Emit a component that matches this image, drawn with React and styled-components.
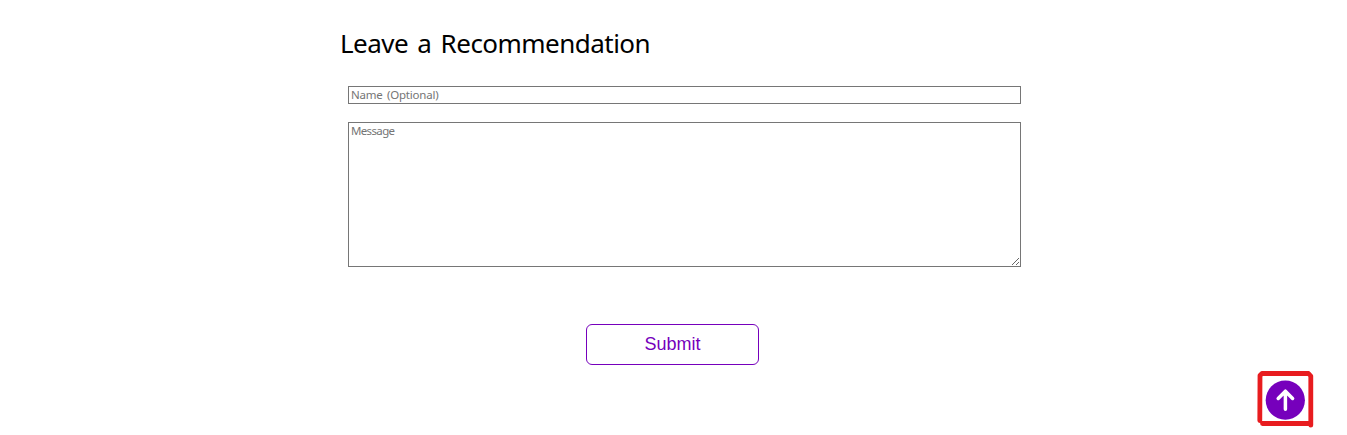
import React from "react";
import styled, { createGlobalStyle } from "styled-components";

const GlobalStyle = createGlobalStyle`
  * { box-sizing: border-box; }
  body { margin: 0; background: #fff; overflow: hidden; }
`;

const humanist = `"Trebuchet MS", "Noto Sans", sans-serif`;

const Section = styled.section`
  width: 680px;
  margin-left: 341px;
  padding-top: 25px;
  display: flex;
  flex-direction: column;
`;

const Title = styled.h2`
  margin: 0 0 0 -1px;
  height: 36px;
  font: 400 26px/36px ${humanist};
  letter-spacing: -0.53px;
  word-spacing: 3px;
  color: #000;
  white-space: nowrap;
`;

const Form = styled.form`
  margin: 25px 0 0 7px;
  display: flex;
  flex-direction: column;
`;

const NameField = styled.input`
  height: 18px;
  padding: 0 2px 1px;
  border: 1px solid #767676;
  border-radius: 0;
  background: #fff;
  font: 400 11.5px/15px ${humanist};
  letter-spacing: -0.2px;
  word-spacing: 1.5px;
  outline: none;
  &::placeholder { color: #757575; opacity: 1; }
`;

const MessageField = styled.textarea`
  height: 145px;
  margin: 18px 0 0;
  padding: 0 2px;
  border: 1px solid #767676;
  border-radius: 0;
  background: #fff;
  font: 400 11.5px/16px ${humanist};
  letter-spacing: -0.65px;
  outline: none;
  resize: both;
  &::placeholder { color: #757575; opacity: 1; }
`;

const SubmitButton = styled.button`
  width: 173px;
  height: 41px;
  margin: 57px 0 0 238px;
  padding: 0 0 1px;
  border: 1px solid #7600bc;
  border-radius: 6px;
  background: #fff;
  color: #7600bc;
  font: 400 18px/38px "Liberation Sans", Arial, sans-serif;
`;

const TopLink = styled.a`
  position: fixed;
  right: 32px;
  bottom: 5px;
  width: 60px;
  height: 62px;
  svg { display: block; }
`;

export default function App() {
  return (
    <>
      <GlobalStyle />
      <Section>
        <Title>Leave a Recommendation</Title>
        <Form>
          <NameField placeholder="Name (Optional)" />
          <MessageField placeholder="Message" />
          <SubmitButton type="button">Submit</SubmitButton>
        </Form>
      </Section>
      <TopLink href="#" aria-label="Back to top">
        <svg width="60" height="62" viewBox="1255 368 60 62" fill="none" strokeLinecap="round" strokeLinejoin="round">
          <circle cx="1285.3" cy="400.2" r="19.6" fill="#7600bc" />
          <path d="M1285.4 409.3V391.7M1278.2 398.4L1285.4 391.2L1292.6 398.4" stroke="#fff" strokeWidth="3.5" />
          <path d="M1262.5 423.5H1310.5M1259.8 420.5L1260 375.5L1262 373.5H1308.5L1310.8 376V425.2" stroke="#e81c1f" strokeWidth="4.8" />
        </svg>
      </TopLink>
    </>
  );
}
